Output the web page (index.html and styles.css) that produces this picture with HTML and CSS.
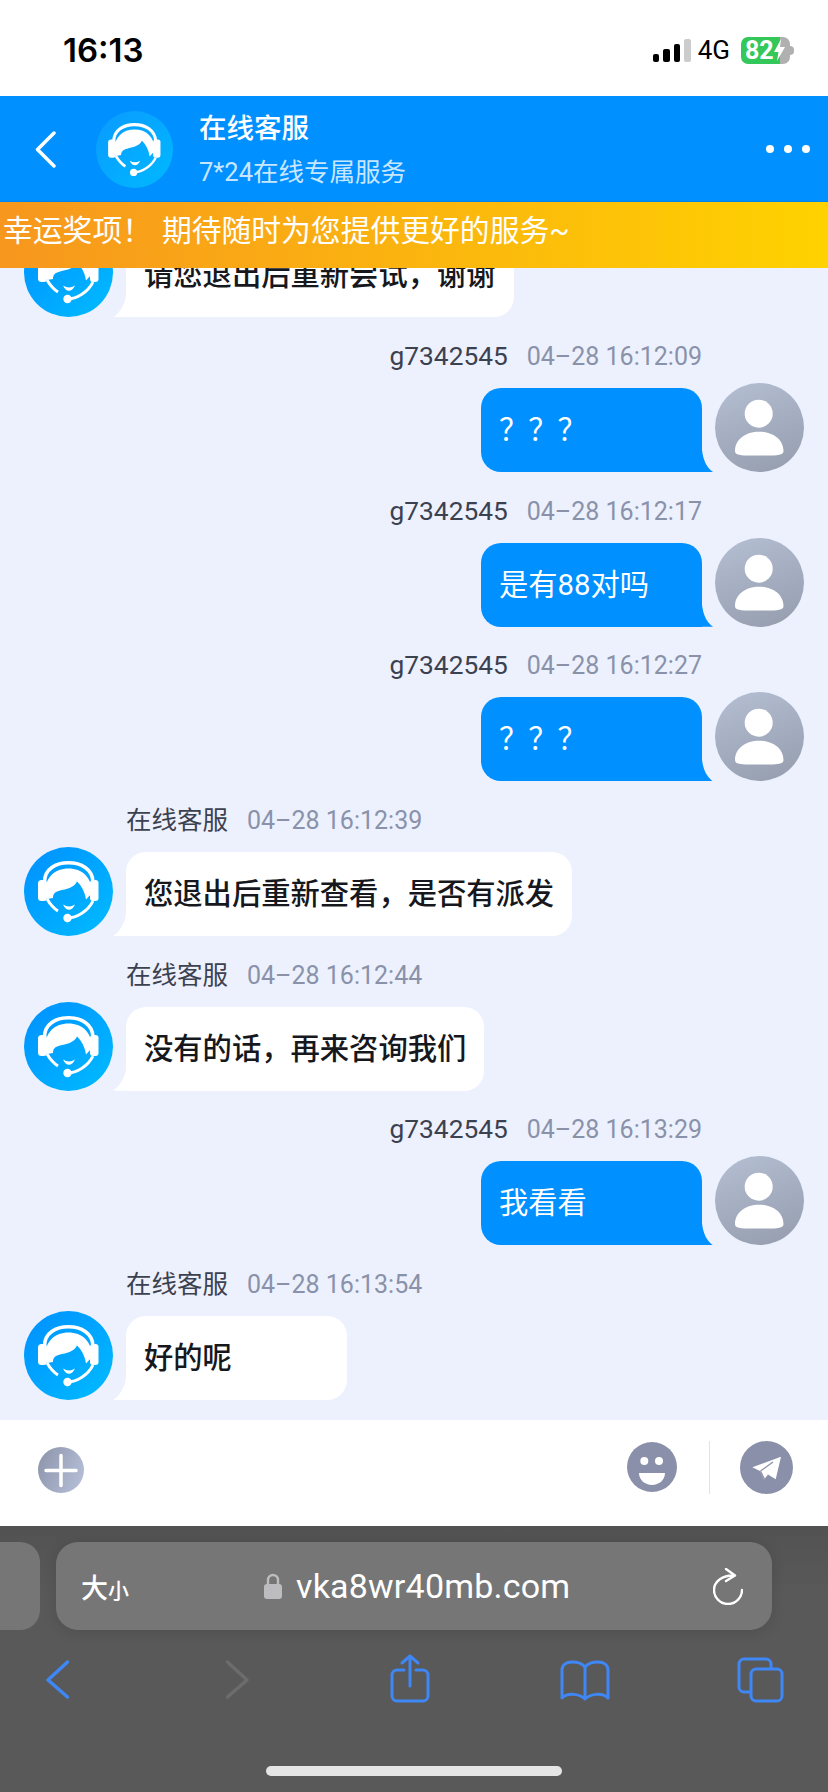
FILE: index.html
```html
<!DOCTYPE html>
<html>
  <head>
    <title>在线客服</title>
    <link rel="stylesheet" href="styles.css">
  </head>
  <body>
    <svg class="defs" width="0" height="0">
      <symbol id="agent" viewBox="0 0 89 89">
        <path d="M20.500 35C20.500 22 32 15.800 44.500 15.800S68.500 22 69 35" fill="none" stroke="#fff" stroke-width="3.600"/>
        <rect x="14" y="33" width="9" height="21" rx="3.500" fill="#fff"/>
        <rect x="66" y="33" width="8.500" height="21" rx="3" fill="#fff"/>
        <path d="M21 46C21 30 31 21.500 44.500 21.500C58 21.500 68 30 68 46L62 52.500C61 45 57 38 53 34.500C50 41 42 42 36 43.500C32 44.500 29 46 29 51L23 52Z" fill="#fff"/>
        <path d="M23 52C26 57 29 61 34 64" fill="none" stroke="#fff" stroke-width="3"/>
        <path d="M39 57.500C43 60 47 60 51 57.500C48 64.500 42 64.500 39 57.500Z" fill="#fff"/>
        <path d="M43 71C53 71 64 64 69 54" fill="none" stroke="#fff" stroke-width="2.800"/>
        <circle cx="43.500" cy="71" r="4.200" fill="#fff"/>
      </symbol>
      <symbol id="user" viewBox="0 0 89 89">
        <circle cx="43.700" cy="30.700" r="14" fill="#fff"/>
        <path d="M20 68C20 56 31 48.700 44 48.700S68.500 56 68.500 68C68.500 73 60 72.500 44 72.500S20 73 20 68Z" fill="#fff"/>
      </symbol>
    </svg>

    <div class="status-bar">
      <span class="clock">16:13</span>
      <div class="status-right">
        <div class="signal">
          <i class="sig1"></i><i class="sig2"></i><i class="sig3"></i><i class="sig4"></i>
        </div>
        <span class="net">4G</span>
        <div class="battery">
          <span>82</span>
          <svg width="11" height="22" viewBox="0 0 11 22"><path d="M7 0L0 13H4.500L3 22L11 8H6Z" fill="#fff"/></svg>
        </div>
      </div>
    </div>

    <div class="header">
      <svg class="header-back" width="21" height="37" viewBox="0 0 21 37"><path d="M19 2L2.500 18.500L19 35" fill="none" stroke="#fff" stroke-width="3.500" stroke-linecap="round" stroke-linejoin="round"/></svg>
      <div class="avatar avatar-head"><svg width="77" height="77"><use href="#agent"/></svg></div>
      <div class="header-info">
        <div class="header-title">在线客服</div>
        <div class="header-sub">7*24在线专属服务</div>
      </div>
      <div class="dots"><i></i><i></i><i></i></div>
    </div>

    <div class="notice">幸运奖项！ 期待随时为您提供更好的服务~</div>

    <div class="chat">
      <div class="msg">
        <div class="avatar avatar-agent"><svg width="89" height="89"><use href="#agent"/></svg></div>
        <div class="msg-body">
          <div class="bubble">请您退出后重新尝试，谢谢</div>
        </div>
      </div>

      <div class="msg msg-user">
        <div class="avatar avatar-user"><svg width="89" height="89"><use href="#user"/></svg></div>
        <div class="msg-body">
          <div class="meta"><span class="name">g7342545</span><span class="time">04–28 16:12:09</span></div>
          <div class="bubble">？？？</div>
        </div>
      </div>

      <div class="msg msg-user">
        <div class="avatar avatar-user"><svg width="89" height="89"><use href="#user"/></svg></div>
        <div class="msg-body">
          <div class="meta"><span class="name">g7342545</span><span class="time">04–28 16:12:17</span></div>
          <div class="bubble">是有88对吗</div>
        </div>
      </div>

      <div class="msg msg-user">
        <div class="avatar avatar-user"><svg width="89" height="89"><use href="#user"/></svg></div>
        <div class="msg-body">
          <div class="meta"><span class="name">g7342545</span><span class="time">04–28 16:12:27</span></div>
          <div class="bubble">？？？</div>
        </div>
      </div>

      <div class="msg">
        <div class="avatar avatar-agent"><svg width="89" height="89"><use href="#agent"/></svg></div>
        <div class="msg-body">
          <div class="meta"><span class="name">在线客服</span><span class="time">04–28 16:12:39</span></div>
          <div class="bubble">您退出后重新查看，是否有派发</div>
        </div>
      </div>

      <div class="msg">
        <div class="avatar avatar-agent"><svg width="89" height="89"><use href="#agent"/></svg></div>
        <div class="msg-body">
          <div class="meta"><span class="name">在线客服</span><span class="time">04–28 16:12:44</span></div>
          <div class="bubble">没有的话，再来咨询我们</div>
        </div>
      </div>

      <div class="msg msg-user">
        <div class="avatar avatar-user"><svg width="89" height="89"><use href="#user"/></svg></div>
        <div class="msg-body">
          <div class="meta"><span class="name">g7342545</span><span class="time">04–28 16:13:29</span></div>
          <div class="bubble">我看看</div>
        </div>
      </div>

      <div class="msg">
        <div class="avatar avatar-agent"><svg width="89" height="89"><use href="#agent"/></svg></div>
        <div class="msg-body">
          <div class="meta"><span class="name">在线客服</span><span class="time">04–28 16:13:54</span></div>
          <div class="bubble">好的呢</div>
        </div>
      </div>
    </div>

    <div class="input-bar">
      <svg class="btn-plus" width="46" height="46" viewBox="0 0 46 46">
        <defs><linearGradient id="plusBg" x1="0" y1="0.300" x2="1" y2="0.700"><stop offset="0" stop-color="#8f97ad"/><stop offset="1" stop-color="#b4bed6"/></linearGradient></defs>
        <circle cx="23" cy="23" r="23" fill="url(#plusBg)"/>
        <path d="M8 23.500H38M23 8.500V38.500" stroke="#fff" stroke-width="3.500" stroke-linecap="round"/>
      </svg>
      <svg class="btn-smile" width="50" height="50" viewBox="0 0 50 50">
        <circle cx="25" cy="25" r="25" fill="#8a90a9"/>
        <circle cx="17.300" cy="19" r="4" fill="#fff"/>
        <circle cx="32" cy="19" r="4" fill="#fff"/>
        <path d="M12 31H38C38 38 32 43 25 43S12 38 12 31Z" fill="#fff"/>
      </svg>
      <div class="divider"></div>
      <svg class="btn-send" width="53" height="53" viewBox="0 0 53 53">
        <circle cx="26.500" cy="26.500" r="26.500" fill="#8a90a9"/>
        <path d="M41 15.700L12.300 26.300L20 30L24 38.500L28 33.500L35.700 38.300Z" fill="#fff"/>
        <path d="M20.500 30L33 21M20.500 30L24.500 38" stroke="#8a90a9" stroke-width="1.200" fill="none"/>
      </svg>
    </div>

    <div class="browser">
      <div class="url-row">
        <div class="tab-prev"></div>
        <div class="url-pill">
          <span class="font-size">大<small>小</small></span>
          <svg class="lock" width="18" height="26" viewBox="0 0 18 26">
            <path d="M4 12V7a5 5 0 0 1 10 0V12" fill="none" stroke="#bdbdc0" stroke-width="2.400"/>
            <rect x="0" y="11" width="18" height="15" rx="3" fill="#bdbdc0"/>
          </svg>
          <span class="domain">vka8wr40mb.com</span>
          <svg class="reload" width="30" height="37" viewBox="0 0 30 37">
            <path d="M13 1L22 7.500L13 13M21 7.500C10 7 1 13 1 22A14 14 0 0 0 29 22" fill="none" stroke="#fff" stroke-width="2.400" stroke-linecap="round" stroke-linejoin="round"/>
          </svg>
        </div>
      </div>

      <div class="nav">
        <svg width="60" height="60" viewBox="0 0 60 60"><path class="ico" d="M39.500 13L20 31L39.500 48"/></svg>
        <svg width="60" height="60" viewBox="0 0 60 60"><path class="ico ico-off" d="M20.500 13L40 31L20.500 48"/></svg>
        <svg width="60" height="60" viewBox="0 0 60 60"><path class="ico ico-thin" d="M22 14L30 7L38 14M30 7V37M24 21H17a5 5 0 0 0-5 5V47a5 5 0 0 0 5 5H43a5 5 0 0 0 5-5V26a5 5 0 0 0-5-5H36"/></svg>
        <svg width="60" height="60" viewBox="0 0 60 60"><path class="ico ico-thin" d="M30 18C27 14 22 13 17 13C11 13 7 16 7 21V49C12 44 24 44 30 50C36 44 48 44 53 49V21C53 16 49 13 43 13C38 13 33 14 30 18ZM30 18V50"/></svg>
        <svg width="60" height="60" viewBox="0 0 60 60"><path class="ico ico-thin" d="M20 43H14a5 5 0 0 1-5-5V15a5 5 0 0 1 5-5H36a5 5 0 0 1 5 5V19M26 20H47a5 5 0 0 1 5 5V47a5 5 0 0 1-5 5H26a5 5 0 0 1-5-5V25a5 5 0 0 1 5-5Z"/></svg>
      </div>

      <div class="home-bar"></div>
    </div>
  </body>
</html>
```

FILE: styles.css
```css
body {
  margin: 0;
  width: 828px;
  height: 1792px;
  overflow: hidden;
  display: flex;
  flex-direction: column;
  font-family: Roboto, "Noto Sans CJK SC", sans-serif;
  background: #fff;
}
.defs {
  position: absolute;
}

/* status bar */
.status-bar {
  height: 96px;
  flex: none;
  display: flex;
  align-items: center;
  justify-content: space-between;
  padding: 4px 38px 0 63px;
  box-sizing: border-box;
  color: #000;
}
.clock {
  font-family: Inter, sans-serif;
  font-size: 33px;
  font-weight: 600;
}
.status-right {
  display: flex;
  align-items: center;
}
.signal {
  display: flex;
  align-items: flex-end;
  gap: 4px;
  height: 23px;
}
.signal i {
  width: 6.5px;
  background: #000;
  border-radius: 2px;
}
.signal .sig1 { height: 8px; }
.signal .sig2 { height: 13px; }
.signal .sig3 { height: 18px; }
.signal .sig4 { height: 23px; background: #ccc; }
.net {
  font-size: 26px;
  margin: 0 11px 0 7px;
}
.battery {
  position: relative;
  width: 49px;
  height: 27px;
  border-radius: 7px;
  background: linear-gradient(90deg, #34c759 80%, #b0b0b0 80%);
  display: flex;
  align-items: center;
  padding-left: 4px;
  box-sizing: border-box;
  color: #fff;
  font-size: 25px;
  font-weight: 700;
}
.battery::after {
  content: "";
  position: absolute;
  right: -4px;
  top: 9px;
  width: 4px;
  height: 9px;
  background: #b0b0b0;
  border-radius: 0 4px 4px 0;
}

/* blue header */
.header {
  height: 106px;
  flex: none;
  background: #0090ff;
  display: flex;
  align-items: center;
  color: #fff;
}
.header-back {
  margin-left: 35px;
}
.avatar {
  flex: none;
  border-radius: 50%;
  display: flex;
}
.avatar-head {
  width: 77px;
  height: 77px;
  margin-left: 40px;
  background: linear-gradient(135deg, #0a9aff, #00b9ff);
}
.avatar-agent {
  width: 89px;
  height: 89px;
  background: linear-gradient(135deg, #0090ff, #00bcff);
}
.avatar-user {
  width: 89px;
  height: 89px;
  background: linear-gradient(160deg, #b5bfd3, #949cad);
}
.header-info {
  margin-left: 26px;
  padding-top: 3px;
}
.header-title {
  font-size: 27.500px;
  font-weight: 500;
  line-height: 40px;
  margin-top: -2px;
}
.header-sub {
  font-size: 25.500px;
  line-height: 36px;
  margin-top: 5px;
  color: rgba(255, 255, 255, 0.8);
}
.dots {
  margin-left: auto;
  margin-right: 18px;
  display: flex;
  gap: 10px;
}
.dots i {
  width: 8px;
  height: 8px;
  border-radius: 50%;
  background: #fff;
}

/* notice strip */
.notice {
  height: 66px;
  flex: none;
  box-sizing: border-box;
  padding-left: 3px;
  line-height: 58px;
  background: linear-gradient(90deg, #f7971e, #ffd200);
  color: #fff;
  font-size: 29.800px;
  word-spacing: 2.500px;
  white-space: nowrap;
  box-shadow: 0 -1px 1px rgba(0, 0, 0, 0.08);
}

/* messages */
.chat {
  height: 1152px;
  flex: none;
  box-sizing: border-box;
  overflow: hidden;
  padding: 0 24px 20px;
  display: flex;
  flex-direction: column;
  justify-content: flex-end;
  background: #edf1fe;
}
.msg {
  flex: none;
  display: flex;
  align-items: flex-end;
  gap: 13px;
  margin-top: 22.670px;
}
.msg-user {
  flex-direction: row-reverse;
}
.msg-body {
  display: flex;
  flex-direction: column;
  align-items: flex-start;
}
.msg-user .msg-body {
  align-items: flex-end;
}
.meta {
  height: 32px;
  line-height: 32px;
  margin-bottom: 16px;
  white-space: nowrap;
}
.name {
  color: #3c414f;
  font-size: 25.500px;
  margin-right: 19px;
}
.msg-user .name {
  font-size: 26.300px;
}
.time {
  color: #8a92aa;
  font-size: 25px;
}
.bubble {
  position: relative;
  box-sizing: border-box;
  height: 84px;
  min-width: 221px;
  padding: 0 18px;
  line-height: 84px;
  font-size: 29.300px;
  font-weight: 500;
  white-space: nowrap;
  color: #16181d;
  background: #fff;
  border-radius: 20px 20px 20px 0;
}
.bubble::after {
  content: "";
  position: absolute;
  left: -13px;
  bottom: 0;
  width: 13px;
  height: 22px;
  background: #fff;
  clip-path: path("M13 0C12 9 7 17 0 22H13Z");
}
.msg-user .bubble {
  color: #fff;
  font-weight: 400;
  background: #0090ff;
  border-radius: 20px 20px 0 20px;
}
.msg-user .bubble::after {
  left: auto;
  right: -11px;
  width: 11px;
  background: #0090ff;
  clip-path: path("M0 0C1 9 4 17 11 22H0Z");
}

/* input row */
.input-bar {
  height: 106px;
  flex: none;
  box-sizing: border-box;
  display: flex;
  align-items: center;
  padding: 0 35px 12px 38px;
  background: #fff;
}
.btn-plus {
  margin-top: 6px;
}
.btn-smile {
  margin-left: auto;
}
.divider {
  width: 1px;
  height: 53px;
  margin: 0 30px 0 32px;
  background: #dfe3ea;
}

/* browser chrome */
.browser {
  flex: 1;
  background: linear-gradient(180deg, #525252, #595959 25%);
}
.url-row {
  display: flex;
  gap: 16px;
  padding-top: 16px;
  height: 88px;
}
.tab-prev {
  width: 40px;
  background: #767676;
  border-radius: 0 20px 20px 0;
}
.url-pill {
  width: 716px;
  box-sizing: border-box;
  display: flex;
  align-items: center;
  padding: 0 29px 0 25px;
  background: #767676;
  border-radius: 22px;
  box-shadow: 0 2px 14px rgba(0, 0, 0, 0.12);
  color: #fff;
}
.font-size {
  width: 50px;
  font-size: 27px;
  font-weight: 500;
  white-space: nowrap;
}
.font-size small {
  font-size: 21px;
}
.lock {
  margin-left: 133px;
}
.domain {
  margin-left: 14px;
  font-size: 34px;
  letter-spacing: 0.2px;
}
.reload {
  margin-left: auto;
}
.nav {
  display: grid;
  grid-template-columns: 179.500px 173px 175px 175px 60px;
  padding-left: 27.500px;
  margin-top: 19px;
  height: 60px;
}
.ico {
  fill: none;
  stroke: #3f87f5;
  stroke-width: 3.500px;
  stroke-linecap: round;
  stroke-linejoin: round;
}
.ico-thin {
  stroke-width: 3px;
}
.ico-off {
  stroke: #6c6c6c;
}
.home-bar {
  width: 296px;
  height: 10px;
  margin: 57px auto 0;
  border-radius: 5px;
  background: #e5e5e5;
}
```
